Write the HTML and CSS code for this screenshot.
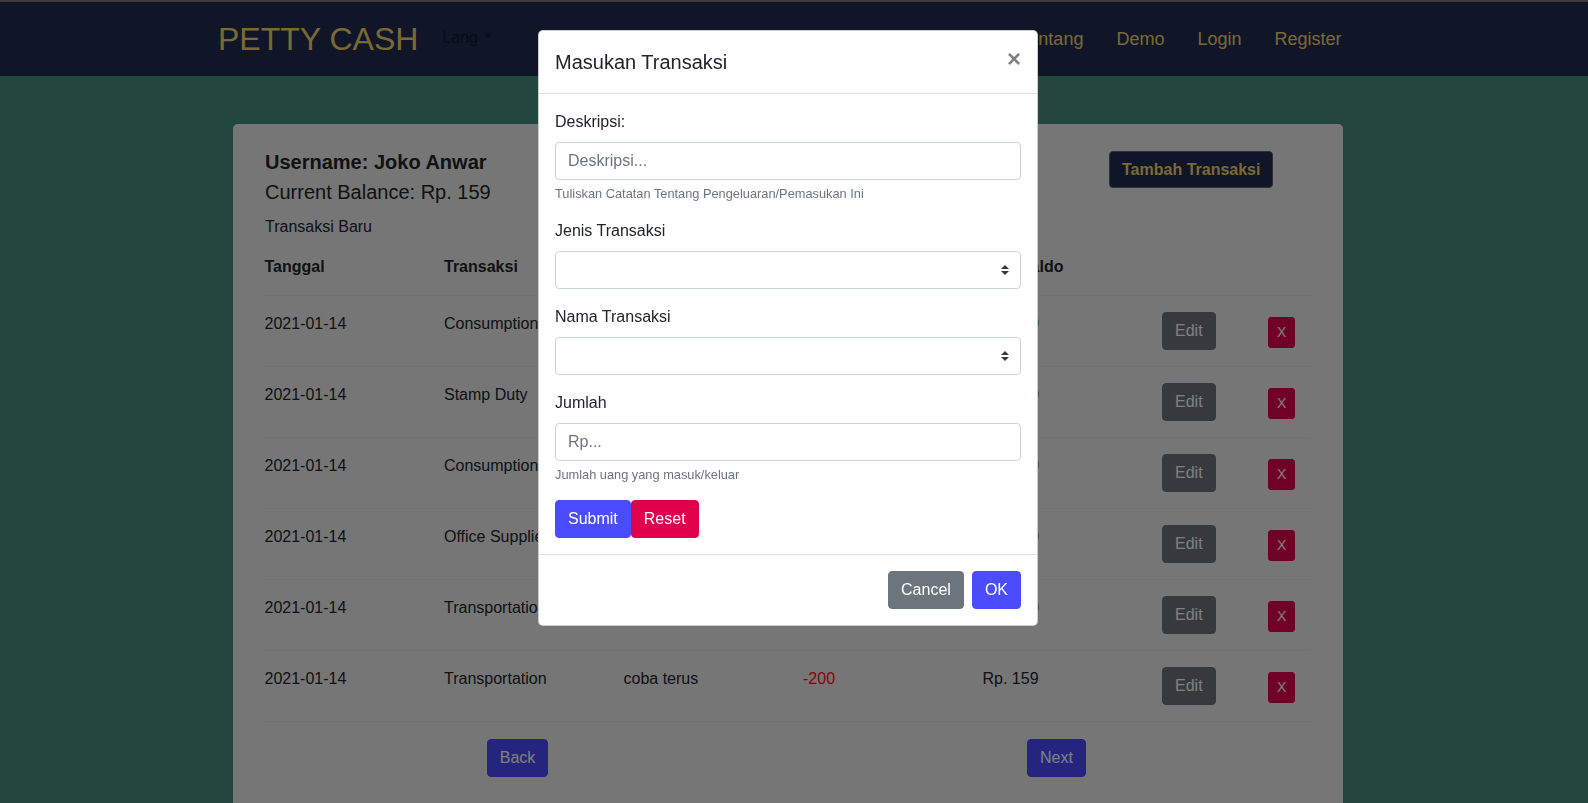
FILE: index.html
```html
<!DOCTYPE html>
<html lang="id">
<head>
<meta charset="utf-8">
<title>Petty Cash</title>
<link rel="stylesheet" href="styles.css">
</head>
<body>
<div class="topline"></div>
<nav class="navbar">
  <div class="nav-container">
    <a class="brand" href="#">PETTY CASH</a>
    <ul class="nav-left">
      <li><a class="nav-link lang" href="#">Lang<span class="caret"></span></a></li>
    </ul>
    <ul class="nav-right">
      <li><a class="nav-link" href="#">Tentang</a></li>
      <li><a class="nav-link" href="#">Demo</a></li>
      <li><a class="nav-link" href="#">Login</a></li>
      <li><a class="nav-link" href="#">Register</a></li>
    </ul>
  </div>
</nav>

<main class="main">
  <div class="container">
    <div class="panel">
      <div class="panel-head">
        <div class="info">
          <h4 class="username">Username: Joko Anwar</h4>
          <p class="balance">Current Balance: Rp. 159</p>
          <p class="newtx">Transaksi Baru</p>
        </div>
        <div class="head-action">
          <button class="btn btn-navy">Tambah Transaksi</button>
        </div>
      </div>

      <div class="table">
        <div class="tr th">
          <div class="cell">Tanggal</div>
          <div class="cell">Transaksi</div>
          <div class="cell">Keterangan</div>
          <div class="cell">Jumlah</div>
          <div class="cell">Sisa Saldo</div>
          <div class="cell"></div>
          <div class="cell"></div>
        </div>
        <div class="tr">
          <div class="cell">2021-01-14</div>
          <div class="cell">Consumption</div>
          <div class="cell">makan siang</div>
          <div class="cell plus">100</div>
          <div class="cell saldo">Rp. 459</div>
          <div class="cell"><button class="btn btn-secondary">Edit</button></div>
          <div class="cell"><button class="btn btn-sm btn-danger">X</button></div>
        </div>
        <div class="tr">
          <div class="cell">2021-01-14</div>
          <div class="cell">Stamp Duty</div>
          <div class="cell">materai</div>
          <div class="cell minus">-50</div>
          <div class="cell saldo">Rp. 409</div>
          <div class="cell"><button class="btn btn-secondary">Edit</button></div>
          <div class="cell"><button class="btn btn-sm btn-danger">X</button></div>
        </div>
        <div class="tr">
          <div class="cell">2021-01-14</div>
          <div class="cell">Consumption</div>
          <div class="cell">kopi</div>
          <div class="cell minus">-20</div>
          <div class="cell saldo">Rp. 389</div>
          <div class="cell"><button class="btn btn-secondary">Edit</button></div>
          <div class="cell"><button class="btn btn-sm btn-danger">X</button></div>
        </div>
        <div class="tr">
          <div class="cell">2021-01-14</div>
          <div class="cell">Office Supplies</div>
          <div class="cell">kertas</div>
          <div class="cell minus">-30</div>
          <div class="cell saldo">Rp. 359</div>
          <div class="cell"><button class="btn btn-secondary">Edit</button></div>
          <div class="cell"><button class="btn btn-sm btn-danger">X</button></div>
        </div>
        <div class="tr">
          <div class="cell">2021-01-14</div>
          <div class="cell">Transportation</div>
          <div class="cell">coba</div>
          <div class="cell plus">0</div>
          <div class="cell saldo">Rp. 359</div>
          <div class="cell"><button class="btn btn-secondary">Edit</button></div>
          <div class="cell"><button class="btn btn-sm btn-danger">X</button></div>
        </div>
        <div class="tr">
          <div class="cell">2021-01-14</div>
          <div class="cell">Transportation</div>
          <div class="cell">coba terus</div>
          <div class="cell minus">-200</div>
          <div class="cell">Rp. 159</div>
          <div class="cell"><button class="btn btn-secondary">Edit</button></div>
          <div class="cell"><button class="btn btn-sm btn-danger">X</button></div>
        </div>
      </div>

      <div class="pager">
        <div class="pager-col"><button class="btn btn-primary">Back</button></div>
        <div class="pager-col"><button class="btn btn-primary">Next</button></div>
      </div>
    </div>
  </div>
</main>

<div class="backdrop"></div>
<div class="modal">
  <div class="modal-dialog">
    <div class="modal-content">
      <div class="modal-header">
        <h5 class="modal-title">Masukan Transaksi</h5>
        <button class="close" type="button">&times;</button>
      </div>
      <div class="modal-body">
        <div class="form-group">
          <label>Deskripsi:</label>
          <input class="form-control" type="text" placeholder="Deskripsi...">
          <small class="form-text">Tuliskan Catatan Tentang Pengeluaran/Pemasukan Ini</small>
        </div>
        <div class="form-group">
          <label>Jenis Transaksi</label>
          <div class="select-wrap">
            <select class="form-control custom-select"><option></option></select>
            <svg class="select-arrows" width="8" height="10" viewBox="0 0 4 5"><path fill="#343a40" d="M2 0L0 2h4zm0 5L0 3h4z"/></svg>
          </div>
        </div>
        <div class="form-group">
          <label>Nama Transaksi</label>
          <div class="select-wrap">
            <select class="form-control custom-select"><option></option></select>
            <svg class="select-arrows" width="8" height="10" viewBox="0 0 4 5"><path fill="#343a40" d="M2 0L0 2h4zm0 5L0 3h4z"/></svg>
          </div>
        </div>
        <div class="form-group">
          <label>Jumlah</label>
          <input class="form-control" type="text" placeholder="Rp...">
          <small class="form-text">Jumlah uang yang masuk/keluar</small>
        </div>
        <div class="form-actions">
          <button class="btn btn-primary">Submit</button>
          <button class="btn btn-danger">Reset</button>
        </div>
      </div>
      <div class="modal-footer">
        <button class="btn btn-secondary">Cancel</button>
        <button class="btn btn-primary">OK</button>
      </div>
    </div>
  </div>
</div>
</body>
</html>
```

FILE: styles.css
```css
html, body {
  margin: 0;
  height: 100%;
  overflow: hidden;
}
* { box-sizing: border-box; }

body {
  font-family: "Liberation Sans", Arial, Helvetica, sans-serif;
  font-size: 16px;
  line-height: 1.5;
  color: #212529;
  background: #468e7c;
}

.topline {
  height: 2px;
  background: #777777;
}

/* navbar */
.navbar {
  height: 74px;
  background: #202a50;
  padding-right: 12px;
  display: flex;
}
.nav-container {
  width: 1140px;
  margin: 0 auto;
  display: flex;
  align-items: center;
}
.brand {
  font-size: 32px;
  line-height: 1.2;
  color: #f5d36c;
  text-decoration: none;
  margin-right: 16px;
}
.nav-left, .nav-right {
  list-style: none;
  margin: 0;
  padding: 0;
  display: flex;
  align-items: center;
}
.nav-right { margin-left: auto; }
.nav-link {
  display: block;
  padding: 0 16.5px;
  font-size: 18px;
  line-height: 1.5;
  color: #f5d36c;
  text-decoration: none;
}
.nav-link.lang {
  padding: 0 8px;
  font-size: 16px;
  color: rgba(0, 0, 0, 0.5);
  margin-bottom: 3px;
}
.caret {
  display: inline-block;
  margin-left: 6px;
  vertical-align: 0.255em;
  border-top: 0.3em solid;
  border-right: 0.3em solid transparent;
  border-left: 0.3em solid transparent;
  border-bottom: 0;
}

/* main */
.main {
  padding: 48px 12px 0 0;
}
.container {
  width: 1140px;
  margin: 0 auto;
  padding: 0 15px;
}
.panel {
  background: #ededed;
  border-radius: 5px;
  padding: 23px 32px 64px 30px;
}
.panel-head {
  display: flex;
}
.info {
  flex: 1;
  padding-left: 2px;
}
.username {
  margin: 0;
  font-size: 20px;
  font-weight: 700;
  line-height: 30px;
}
.balance {
  margin: 0;
  font-size: 20px;
  line-height: 30px;
}
.newtx {
  margin: 8px 0 0;
  line-height: 24px;
}
.head-action {
  width: 239.5px;
  display: flex;
  justify-content: center;
  align-items: flex-start;
  padding-top: 4px;
}

/* buttons */
.btn {
  display: inline-block;
  font-family: inherit;
  font-size: 16px;
  line-height: 1.5;
  padding: 6px 12px;
  border: 1px solid transparent;
  border-radius: 4px;
  color: #fff;
  background: transparent;
  cursor: pointer;
}
.btn-sm {
  font-size: 14px;
  padding: 4px 8px;
  border-radius: 3px;
}
.btn-navy {
  background: #202a50;
  border-color: #5c6070;
  color: #f5d36c;
  font-weight: 700;
  padding: 5.5px 12px;
}
.btn-secondary {
  background: #6c757d;
  border-color: #6c757d;
}
.btn-danger {
  background: #e0004c;
  border-color: #e0004c;
}
.btn-primary {
  background: #4b4bff;
  border-color: #4b4bff;
}

/* table */
.tr {
  display: grid;
  grid-template-columns: repeat(5, 179.5px) 106px 1fr;
  border-bottom: 1px solid #dee2e6;
}
.cell {
  padding: 16px 0 16px 1.5px;
  white-space: nowrap;
}
.th .cell { font-weight: 700; }
.cell .btn-sm { margin-top: 5px; }
.minus { color: #ff1010; }
.plus { color: #1a7a3a; }
.saldo {
  color: #1b2f6e;
  padding-left: 2px;
}

.pager {
  display: flex;
  margin: 17px -15px 0;
}
.pager-col {
  flex: 1;
  padding: 0 15px;
  text-align: center;
}

/* modal */
.backdrop {
  position: fixed;
  inset: 0;
  background: rgba(0, 0, 0, 0.5);
  z-index: 1040;
}
.modal {
  position: fixed;
  inset: 0;
  z-index: 1050;
  padding-right: 12px;
}
.modal-dialog {
  width: 500px;
  margin: 30px auto 0;
}
.modal-content {
  background: #fff;
  border: 1px solid rgba(0, 0, 0, 0.2);
  border-radius: 5px;
}
.modal-header {
  display: flex;
  align-items: flex-start;
  justify-content: space-between;
  padding: 16px;
  border-bottom: 1px solid #dee2e6;
}
.modal-title {
  margin: 0;
  font-size: 20px;
  font-weight: 400;
  line-height: 1.5;
}
.close {
  font-family: inherit;
  font-size: 24px;
  font-weight: 700;
  line-height: 1;
  color: #000;
  opacity: 0.5;
  text-shadow: 0 1px 0 #fff;
  background: none;
  border: 0;
  padding: 16px;
  margin: -16px -16px -16px auto;
}
.modal-body {
  padding: 16px;
}
.form-group {
  margin-bottom: 16px;
}
.form-group label {
  display: inline-block;
  margin-bottom: 8px;
}
.form-control {
  display: block;
  width: 100%;
  height: 38px;
  padding: 6px 12px;
  font-family: inherit;
  font-size: 16px;
  line-height: 1.5;
  color: #495057;
  background: #fff;
  border: 1px solid #ced4da;
  border-radius: 4px;
}
.form-control::placeholder { color: #6c757d; }
.custom-select {
  appearance: none;
  -webkit-appearance: none;
}
.select-wrap { position: relative; }
.select-arrows {
  position: absolute;
  right: 12px;
  top: 14px;
  pointer-events: none;
}
.form-text {
  display: block;
  margin-top: 4px;
  font-size: 12.8px;
  line-height: 1.5;
  color: #6c757d;
}
.form-actions {
  display: flex;
}
.modal-footer {
  display: flex;
  justify-content: flex-end;
  align-items: center;
  padding: 12px;
  border-top: 1px solid #dee2e6;
}
.modal-footer .btn { margin: 4px; }
```
